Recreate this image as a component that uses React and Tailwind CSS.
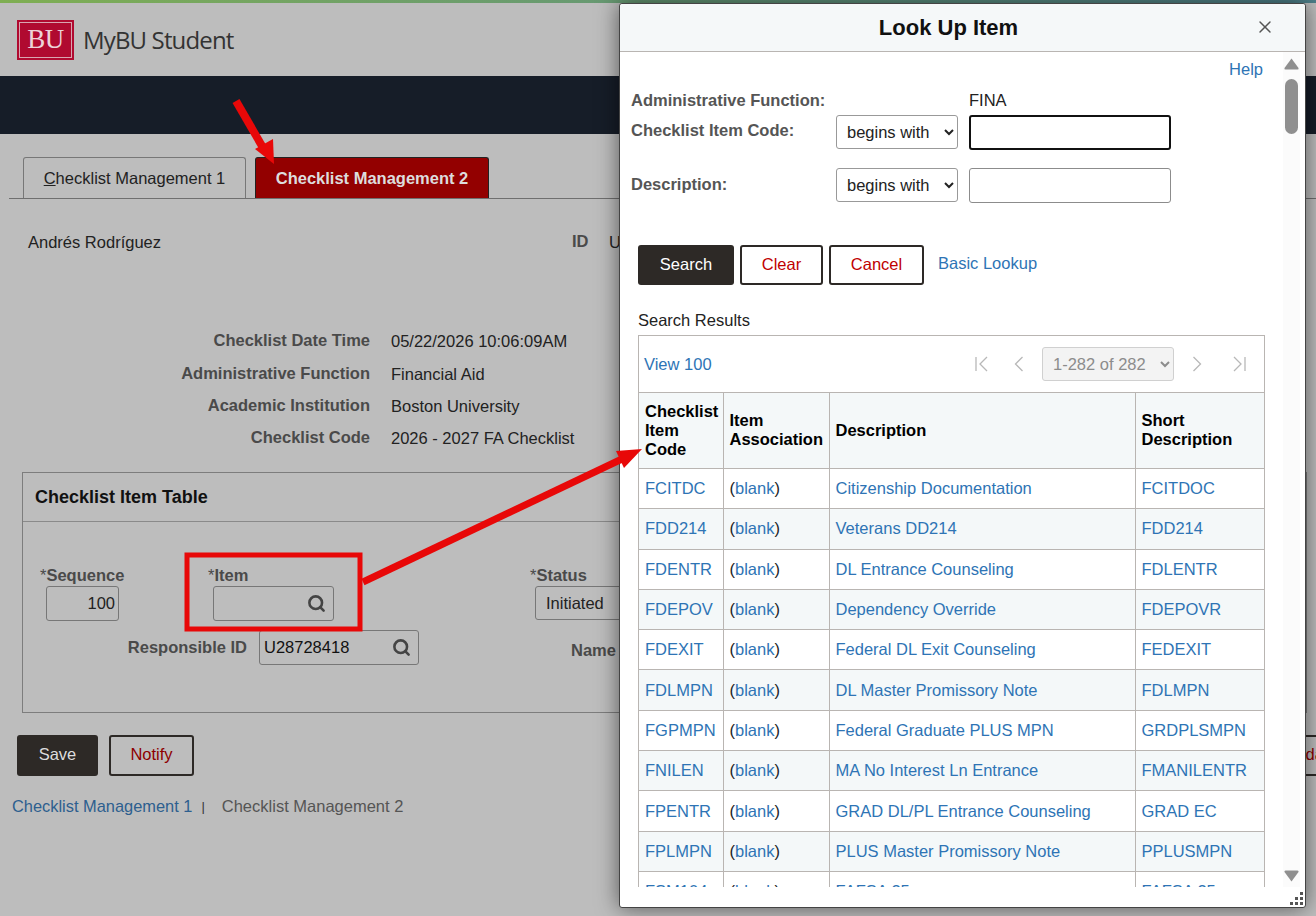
import React from 'react';
import { Search, X } from 'lucide-react';

const summary = [
  ['Checklist Date Time', '05/22/2026 10:06:09AM'],
  ['Administrative Function', 'Financial Aid'],
  ['Academic Institution', 'Boston University'],
  ['Checklist Code', '2026 - 2027 FA Checklist'],
];

const results = [
  ['FCITDC', 'Citizenship Documentation', 'FCITDOC'],
  ['FDD214', 'Veterans DD214', 'FDD214'],
  ['FDENTR', 'DL Entrance Counseling', 'FDLENTR'],
  ['FDEPOV', 'Dependency Override', 'FDEPOVR'],
  ['FDEXIT', 'Federal DL Exit Counseling', 'FEDEXIT'],
  ['FDLMPN', 'DL Master Promissory Note', 'FDLMPN'],
  ['FGPMPN', 'Federal Graduate PLUS MPN', 'GRDPLSMPN'],
  ['FNILEN', 'MA No Interest Ln Entrance', 'FMANILENTR'],
  ['FPENTR', 'GRAD DL/PL Entrance Counseling', 'GRAD EC'],
  ['FPLMPN', 'PLUS Master Promissory Note', 'PPLUSMPN'],
  ['FSM104', 'FAFSA 25', 'FAFSA 25'],
];

// Search-lookup input used in the dimmed form
const LookupInput = ({ value, className }) => (
  <div className={`flex items-center justify-between h-[35px] border border-[#777] rounded-[3px] pl-[4px] pr-[7px] ${className}`}>
    <span className="text-[#111]">{value}</span>
    <Search size={19} strokeWidth={3.25} className="text-[#444]" />
  </div>
);

// Pager arrows, thin and grey because the pager is disabled
const PagerIcon = ({ d, width, className }) => (
  <svg width={width} height="16" viewBox={`0 0 ${width} 16`} fill="none" stroke="#b8b8b8" strokeWidth="1.3" className={className}>
    <path d={d} />
  </svg>
);

const LookUpModal = () => (
  <div className="absolute left-[619px] top-[3px] w-[687px] h-[905px] flex flex-col bg-white border border-[#444] rounded-[3px] shadow-[0_0_22px_rgba(0,0,0,0.55)]">
    <div className="relative h-[47px] shrink-0 flex items-center justify-center pr-[28px] bg-[#f5f8f9] border-b border-[#b9b5b2] box-content rounded-t-[3px]">
      <h1 className="-mt-[1px] text-[22px] font-bold text-[#111]">Look Up Item</h1>
      <X size={20} strokeWidth={1.75} className="absolute right-[30px] top-[13px] text-[#555]" />
    </div>

    <div className="h-[835px] shrink-0 flex overflow-hidden">
      <div className="w-[663px] pl-[11px]">
        <div className="pt-[7px] pr-[20px] h-[28px] text-right text-[#2e74b5] leading-[20px]">Help</div>
        <div className="mt-[10px] h-[20px] flex items-center">
          <span className="w-[338px] font-bold text-[#555]">Administrative Function:</span>
          <span className="text-[#222]">FINA</span>
        </div>
        <div className="mt-[5px] flex items-start">
          <span className="w-[205px] mt-[3px] font-bold text-[#555]">Checklist Item Code:</span>
          <select className="w-[122px] h-[34px] pl-[6px] bg-white border border-[#999] rounded-[3px] text-[#222]">
            <option>begins with</option>
          </select>
          <div className="ml-[11px] w-[202px] h-[35px] border-2 border-[#111] rounded-[3px]"></div>
        </div>
        <div className="mt-[18px] flex items-start">
          <span className="w-[205px] mt-[4px] font-bold text-[#555]">Description:</span>
          <select className="w-[122px] h-[34px] pl-[6px] bg-white border border-[#999] rounded-[3px] text-[#222]">
            <option>begins with</option>
          </select>
          <div className="ml-[11px] w-[202px] h-[35px] border border-[#8c8c8c] rounded-[3px]"></div>
        </div>

        <div className="mt-[42px] ml-[7px] flex items-center gap-[6px]">
          <button className="w-[96px] h-[40px] pb-[2px] rounded-[3px] bg-[#2d2926] text-white">Search</button>
          <button className="w-[83px] h-[40px] pb-[2px] rounded-[3px] border-2 border-[#2d2926] text-[#c00000]">Clear</button>
          <button className="w-[95px] h-[40px] pb-[2px] rounded-[3px] border-2 border-[#2d2926] text-[#c00000]">Cancel</button>
          <span className="ml-[8px] -mt-[3px] text-[#2e74b5]">Basic Lookup</span>
        </div>

        <div className="mt-[23px] ml-[7px] h-[27px] text-[#222]">Search Results</div>

        <div className="ml-[7px] w-[627px] border border-[#b9b5b2] border-b-0">
          <div className="h-[56px] flex items-center pl-[5px] text-[#2e74b5]">
            <span>View 100</span>
            <div className="ml-auto mr-[18px] flex items-center">
              <PagerIcon width={14} d="M1 1V15M12 1L5 8L12 15" />
              <PagerIcon width={10} d="M8.5 1L1.5 8L8.5 15" className="ml-[25px]" />
              <select disabled className="ml-[18px] w-[132px] h-[34px] pl-[6px] bg-[#f3f3f3] border border-[#d0d0d0] rounded-[3px] text-[#8c8c8c] opacity-100">
                <option>1-282 of 282</option>
              </select>
              <PagerIcon width={10} d="M1.5 1L8.5 8L1.5 15" className="ml-[18px]" />
              <PagerIcon width={14} d="M2 1L9 8L2 15M13 1V15" className="ml-[30px]" />
            </div>
          </div>
          <table className="w-[625px] table-fixed border-collapse leading-[19px]">
            <colgroup>
              <col className="w-[84px]" />
              <col className="w-[106px]" />
              <col className="w-[306px]" />
              <col />
            </colgroup>
            <thead>
              <tr className="h-[76px] bg-[#f4f8f9] text-left text-black border-t border-[#b9b5b2]">
                <th className="pl-[6px] pr-0 font-bold">Checklist<br />Item<br />Code</th>
                <th className="pl-[6px] pr-0 pb-[1px] font-bold border-l border-[#b9b5b2]">Item<br />Association</th>
                <th className="pl-[6px] font-bold border-l border-[#b9b5b2]">Description</th>
                <th className="pl-[6px] pb-[1px] font-bold border-l border-[#b9b5b2]">Short<br />Description</th>
              </tr>
            </thead>
            <tbody>
              {results.map((row, idx) => (
                <tr key={row[0]} className={`h-[40.3px] border-t border-[#b9b5b2] text-[#2e74b5] ${idx % 2 ? 'bg-[#f4f8f9]' : 'bg-white'}`}>
                  <td className="pl-[6px]">{row[0]}</td>
                  <td className="pl-[6px] border-l border-[#b9b5b2] text-[#222]">(<span className="text-[#2e74b5]">blank</span>)</td>
                  <td className="pl-[6px] border-l border-[#b9b5b2]">{row[1]}</td>
                  <td className="pl-[6px] border-l border-[#b9b5b2]">{row[2]}</td>
                </tr>
              ))}
            </tbody>
          </table>
        </div>
      </div>

      {/* scrollbar */}
      <div className="w-[17px] bg-[#fbfbfb] flex flex-col items-center">
        <svg width="15" height="12" viewBox="0 0 15 12" className="mt-[6px]"><path d="M7.5 0.5 L14.5 10 Q15 11.5 13.5 11.5 L1.5 11.5 Q0 11.5 0.5 10 Z" fill="#8f8f8f" /></svg>
        <div className="mt-[9px] w-[13px] h-[55px] rounded-full bg-[#8f8f8f]"></div>
        <svg width="15" height="12" viewBox="0 0 15 12" className="mt-auto mb-[5px]"><path d="M7.5 11.5 L14.5 2 Q15 0.5 13.5 0.5 L1.5 0.5 Q0 0.5 0.5 2 Z" fill="#8f8f8f" /></svg>
      </div>
    </div>

    <div className="relative flex-1">
      <svg width="16" height="16" viewBox="0 0 16 16" className="absolute right-0 bottom-0" fill="#555">
        <rect x="11" y="1" width="3" height="3" />
        <rect x="6" y="6" width="3" height="3" />
        <rect x="11" y="6" width="3" height="3" />
        <rect x="1" y="11" width="3" height="3" />
        <rect x="6" y="11" width="3" height="3" />
        <rect x="11" y="11" width="3" height="3" />
      </svg>
    </div>
  </div>
);

const App = () => {
  return (
    <div className="relative w-[1316px] h-[916px] overflow-hidden bg-[#bdbdbd] text-[16.5px] font-['Liberation_Sans',Arial,sans-serif]">
      <div className="h-[3px] bg-gradient-to-r from-[#7fae52] to-[#4d7f8a]"></div>

      <header className="h-[73px] flex items-center pl-[17px]">
        <div className="w-[57px] h-[40px] bg-[#b00a30] p-[2px]">
          <div className="w-full h-full border border-[#d9a5b0] flex items-center justify-center text-[#ecd3d8] text-[27px] tracking-[-0.5px] font-['Liberation_Serif',serif]">BU</div>
        </div>
        <span className="ml-[9px] text-[24px] tracking-[-0.85px] text-[#333] font-['Open_Sans',sans-serif]">MyBU Student</span>
      </header>

      <div className="h-[58px] bg-[#161d28]"></div>

      {/* tabs */}
      <div className="mt-[23px] ml-[9px] h-[42px] flex items-end pl-[14px] gap-[9px] border-b border-[#6f6f6f]">
        <div className="w-[223px] h-[41px] pt-[1px] flex items-center justify-center border border-b-0 border-[#777] rounded-t-[3px] text-[#222]">
          <span><span className="underline">C</span>hecklist Management 1</span>
        </div>
        <div className="w-[234px] h-[41px] pt-[1px] flex items-center justify-center border border-b-0 border-[#222] rounded-t-[3px] bg-[#930000] font-bold text-[#ddd]">
          Checklist Management 2
        </div>
      </div>

      <div className="mt-[33px] h-[20px] flex items-center pl-[28px] text-[#222]">
        <span className="w-[544px]">Andrés Rodríguez</span>
        <span className="w-[37px] -mt-[1px] font-bold text-[#4a4a4a]">ID</span>
        <span>U</span>
      </div>

      {/* checklist summary */}
      <div className="mt-[78px] flex flex-col gap-[12px]">
        {summary.map(([label, value]) => (
          <div key={label} className="h-[20px] first:mb-[1px] flex items-center">
            <span className="w-[370px] text-right font-bold text-[#4a4a4a]">{label}</span>
            <span className="ml-[21px] mt-[2px] text-[#222]">{value}</span>
          </div>
        ))}
      </div>

      {/* checklist item table */}
      <section className="mt-[25px] ml-[22px] w-[1285px] h-[241px] border border-[#7d7d7d]">
        <div className="h-[49px] flex items-center pl-[12px] border-b border-[#8a8a8a] text-[18px] font-bold text-[#111]">Checklist Item Table</div>
        <div className="pl-[17px] pt-[41px]">
          <div className="flex items-start">
            <div className="w-[168px]">
              <div className="h-[23px] font-bold text-[#4a4a4a]"><span className="font-normal">*</span>Sequence</div>
              <div className="ml-[6px] w-[73px] h-[35px] flex items-center justify-end pr-[3px] border border-[#777] rounded-[3px] text-[#222]">100</div>
            </div>
            <div className="w-[322px]">
              <div className="h-[23px] font-bold text-[#4a4a4a]"><span className="font-normal">*</span>Item</div>
              <LookupInput value="" className="ml-[5px] w-[121px]" />
            </div>
            <div>
              <div className="h-[23px] font-bold text-[#4a4a4a]"><span className="font-normal">*</span>Status</div>
              <div className="ml-[5px] w-[200px] h-[34px] pt-[1px] flex items-center pl-[10px] border border-[#777] rounded-[3px] text-[#222]">Initiated</div>
            </div>
          </div>
          <div className="mt-[9px] flex items-start">
            <span className="w-[207px] mt-[5px] text-right font-bold text-[#4a4a4a]">Responsible ID</span>
            <LookupInput value="U28728418" className="ml-[12px] w-[160px]" />
            <span className="ml-[152px] mt-[8px] font-bold text-[#4a4a4a]">Name</span>
          </div>
        </div>
      </section>

      <div className="mt-[22px] pl-[17px] flex gap-[11px]">
        <button className="shrink-0 w-[81px] h-[41px] pb-[2px] rounded-[3px] bg-[#2d2926] text-[#ddd]">Save</button>
        <button className="shrink-0 w-[85px] h-[41px] pb-[2px] rounded-[3px] border-2 border-[#2d2926] text-[#8e0000]">Notify</button>
        <button className="shrink-0 ml-[1061px] w-[90px] h-[41px] pb-[2px] rounded-[3px] border-2 border-[#2d2926] text-[#8e0000]">Update</button>
      </div>

      <div className="mt-[18px] pl-[12px] flex items-center text-[16.4px] text-[#2d5f8f]">
        <span>Checklist Management 1</span>
        <span className="ml-[9px] text-[13px] text-[#333]">|</span>
        <span className="ml-[17px] text-[16.5px] text-[#555]">Checklist Management 2</span>
      </div>

      <LookUpModal />

      {/* annotation overlay */}
      <svg width="1316" height="916" className="absolute left-0 top-0 pointer-events-none">
        <line x1="236" y1="101" x2="262" y2="146" stroke="#e80808" strokeWidth="8" />
        <polygon points="274,164 255,149 273,139" fill="#e80808" />
        <rect x="187" y="555" width="173" height="74" fill="none" stroke="#e80808" strokeWidth="5" />
        <line x1="363" y1="582" x2="622" y2="459" stroke="#e80808" strokeWidth="7" />
        <polygon points="642,449 624,468 616,451" fill="#e80808" />
      </svg>
    </div>
  );
};

export default App;
